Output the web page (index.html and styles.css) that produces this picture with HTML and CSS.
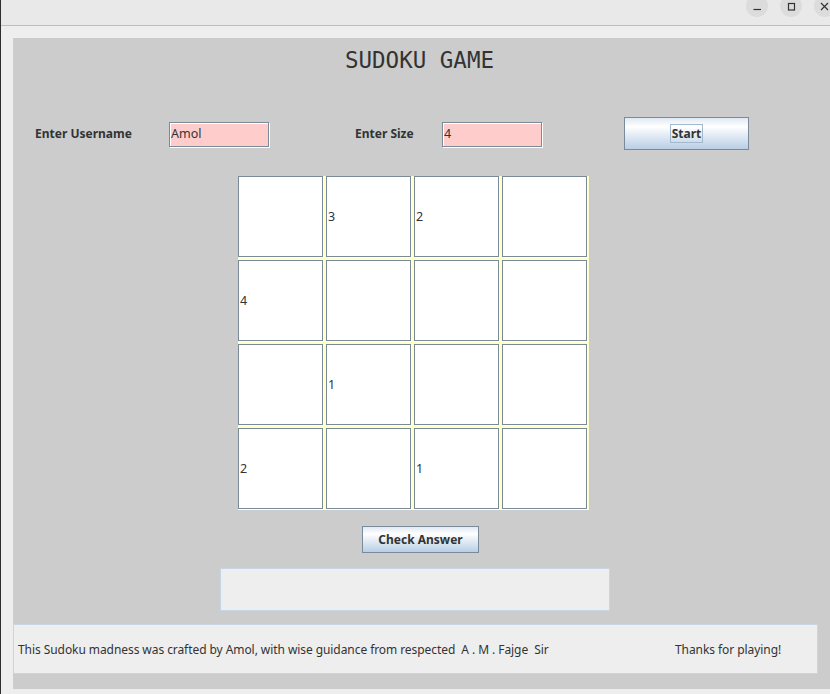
FILE: index.html
```html
<!DOCTYPE html>
<html>
<head>
<meta charset="utf-8">
<link rel="stylesheet" href="styles.css">
</head>
<body>
<div class="titlebar">
  <div class="winbtns">
    <span class="wb"><svg width="22" height="22" viewBox="0 0 22 22"><line x1="7.5" y1="14.5" x2="15" y2="14.5" stroke="#333" stroke-width="1.2"/></svg></span>
    <span class="wb"><svg width="22" height="22" viewBox="0 0 22 22"><rect x="8.5" y="8.5" width="6" height="6.5" fill="none" stroke="#333" stroke-width="1.2"/></svg></span>
    <span class="wb"><svg width="22" height="22" viewBox="0 0 22 22"><path d="M7 8 L14 15 M14 8 L7 15" stroke="#333" stroke-width="1.2" fill="none"/></svg></span>
  </div>
</div>
<div class="panel">
  <h1 class="title">SUDOKU GAME</h1>
  <div class="form-row">
    <span class="lbl lbl-user">Enter Username</span>
    <div class="field f-user">Amol</div>
    <span class="lbl lbl-size">Enter Size</span>
    <div class="field f-size">4</div>
    <button class="btn btn-start"><span class="focus">Start</span></button>
  </div>
  <div class="board">
    <div class="cell"></div><div class="cell">3</div><div class="cell">2</div><div class="cell"></div>
    <div class="cell">4</div><div class="cell"></div><div class="cell"></div><div class="cell"></div>
    <div class="cell"></div><div class="cell">1</div><div class="cell"></div><div class="cell"></div>
    <div class="cell">2</div><div class="cell"></div><div class="cell">1</div><div class="cell"></div>
  </div>
  <button class="btn btn-check">Check Answer</button>
  <div class="message"></div>
  <div class="footer">
    <span class="credit">This Sudoku madness was crafted by Amol, with wise guidance from respected&nbsp; A . M . Fajge&nbsp; Sir</span>
    <span class="thanks">Thanks for playing!</span>
  </div>
</div>
</body>
</html>
```

FILE: styles.css
```css
html, body {
  margin: 0;
  padding: 0;
}
body {
  width: 830px;
  height: 694px;
  overflow: hidden;
  background: #eeeeee;
  border-left: 1px solid #2e2e2e;
  box-sizing: border-box;
  font-family: "Noto Sans", "Open Sans", sans-serif;
  color: #333333;
}
.titlebar {
  height: 25px;
  background: #e9e9e9;
  border-bottom: 1px solid #bdbdbd;
  overflow: hidden;
}
.winbtns {
  display: flex;
  justify-content: flex-end;
  gap: 12px;
  margin-top: -5px;
  margin-right: -6px;
}
.wb {
  width: 22px;
  height: 22px;
  border-radius: 50%;
  background: #dcdcdc;
  display: block;
}
.wb svg { display: block; }
.panel {
  margin: 12px 0 0 12px;
  width: 830px;
  height: 651px;
  background: #cccccc;
  overflow: hidden;
}
.title {
  margin: 0;
  padding-top: 9px;
  width: 813px;
  text-align: center;
  font-family: "DejaVu Sans Mono", monospace;
  font-weight: normal;
  font-size: 22.5px;
  line-height: 26px;
  color: #333333;
}
.form-row {
  display: flex;
  align-items: center;
  margin-top: 44px;
  height: 33px;
}
.lbl {
  font-weight: bold;
  font-size: 12px;
  white-space: nowrap;
}
.lbl-user { margin-left: 22px; width: 134px; }
.lbl-size { margin-left: 86px; width: 87px; }
.field {
  box-sizing: border-box;
  width: 100px;
  height: 25px;
  background: #ffcccc;
  border: 1px solid #7a8a99;
  box-shadow: 1px 1px 0 #ffffff, inset 1px 1px 0 #ffffff;
  font-size: 12.5px;
  line-height: 22px;
  padding-left: 1px;
  margin-top: 1px;
}
.btn {
  box-sizing: border-box;
  border: 1px solid #7a8a99;
  background: linear-gradient(#dfe9f4 0%, #ffffff 28%, #e8eff7 50%, #b8cfe5 100%);
  font-family: "Noto Sans", "Open Sans", sans-serif;
  font-weight: bold;
  font-size: 12px;
  color: #333333;
  padding: 0;
  display: flex;
  align-items: center;
  justify-content: center;
}
.btn-start {
  margin-left: 82px;
  width: 125px;
  height: 33px;
}
.focus {
  border: 1px solid #a3b8cc;
  padding: 0 1px;
  line-height: 17px;
}
.board {
  margin: 26px 0 0 225px;
  width: 351px;
  height: 334px;
  background: #ffffcc;
  display: grid;
  grid-template-columns: repeat(4, 85px);
  grid-template-rows: repeat(4, 81px);
  gap: 3px;
}
.cell {
  box-sizing: border-box;
  background: #ffffff;
  border: 1px solid #7a8a99;
  box-shadow: 1px 1px 0 #ffffff;
  display: flex;
  align-items: center;
  padding-left: 1px;
  font-size: 12.5px;
}
.btn-check {
  margin: 16px 0 0 349px;
  width: 117px;
  height: 27px;
}
.message {
  box-sizing: border-box;
  margin: 15px 0 0 207px;
  width: 390px;
  height: 43px;
  background: #eeeeee;
  border: 1px solid #c6d6e6;
}
.footer {
  box-sizing: border-box;
  margin-top: 13px;
  width: 805px;
  height: 50px;
  background: #eeeeee;
  border: 1px solid #c6d6e6;
  display: grid;
  grid-template-columns: 657px auto;
  align-items: center;
  padding-left: 4px;
  font-size: 12px;
  letter-spacing: -0.07px;
  white-space: nowrap;
}
```
